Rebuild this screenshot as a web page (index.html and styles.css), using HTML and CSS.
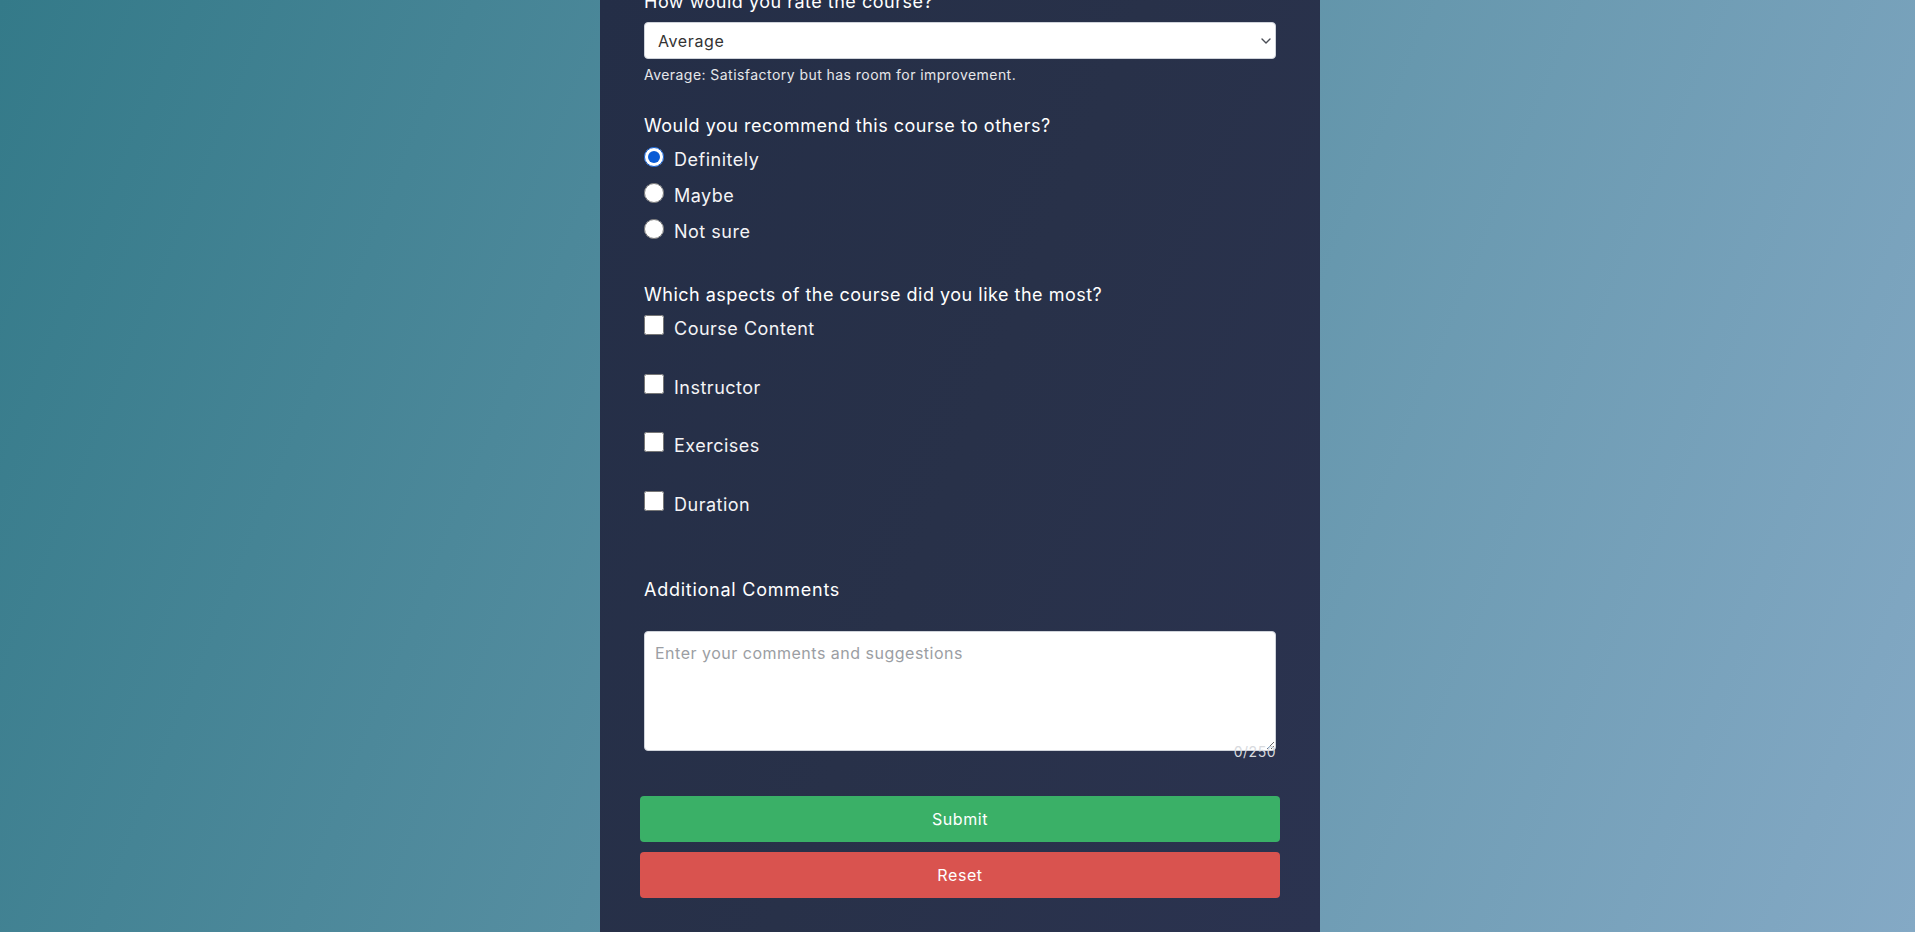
FILE: index.html
```html
<!DOCTYPE html>
<html lang="en">
<head>
<meta charset="utf-8">
<title>Course Feedback</title>
<link rel="stylesheet" href="styles.css">
</head>
<body>
<div class="page">
  <main class="panel">
    <form class="survey">
      <div class="group group-rating">
        <label class="q" for="rating">How would you rate the course?</label>
        <div class="select-wrap">
          <select id="rating" class="select">
            <option>Excellent</option>
            <option>Good</option>
            <option selected>Average</option>
            <option>Poor</option>
          </select>
          <svg class="chevron" width="10" height="6" viewBox="0 0 10 6" aria-hidden="true"><path d="M1 1l4 4 4-4" fill="none" stroke="#4a4d55" stroke-width="1.4" stroke-linecap="round" stroke-linejoin="round"/></svg>
        </div>
        <p class="hint">Average: Satisfactory but has room for improvement.</p>
      </div>

      <div class="group group-recommend">
        <p class="q">Would you recommend this course to others?</p>
        <div class="radio-list">
          <label class="opt"><input class="radio" type="radio" name="recommend" checked><span>Definitely</span></label>
          <label class="opt"><input class="radio" type="radio" name="recommend"><span>Maybe</span></label>
          <label class="opt"><input class="radio" type="radio" name="recommend"><span>Not sure</span></label>
        </div>
      </div>

      <div class="group group-aspects">
        <p class="q">Which aspects of the course did you like the most?</p>
        <div class="check-list">
          <label class="opt"><input class="check" type="checkbox"><span>Course Content</span></label>
          <label class="opt"><input class="check" type="checkbox"><span>Instructor</span></label>
          <label class="opt"><input class="check" type="checkbox"><span>Exercises</span></label>
          <label class="opt"><input class="check" type="checkbox"><span>Duration</span></label>
        </div>
      </div>

      <div class="group group-comments">
        <label class="q q-comments" for="comments">Additional Comments</label>
        <textarea id="comments" class="comments" placeholder="Enter your comments and suggestions"></textarea>
        <div class="counter">0/250</div>
      </div>

      <div class="actions">
        <button type="submit" class="btn btn-submit">Submit</button>
        <button type="reset" class="btn btn-reset">Reset</button>
      </div>
    </form>
  </main>
</div>
</body>
</html>
```

FILE: styles.css
```css
html, body {
  margin: 0;
  height: 100%;
}

body {
  font-family: Inter, "Noto Sans", "DejaVu Sans", sans-serif;
  color: #f4f4f6;
  letter-spacing: 0.5px;
}

.page {
  height: 100vh;
  overflow: hidden;
  display: flex;
  justify-content: center;
  padding-left: 5px;
  box-sizing: border-box;
  background: linear-gradient(112deg, #347a89 0%, #5d92a6 50%, #84a9c5 100%);
}

.panel {
  width: 720px;
  flex: none;
  box-sizing: border-box;
  padding: 0 40px 40px;
  background: linear-gradient(112deg, #242e47 0%, #283149 50%, #2b3350 100%);
}

.survey {
  margin-top: -12px;
}

.group {
  padding: 0 4px;
}

.q {
  display: block;
  margin: 0 0 7px;
  font-size: 18px;
  line-height: 27px;
  color: #ffffff;
}

.group-rating .q {
  margin-bottom: 7px;
}

.select-wrap {
  position: relative;
}

.select {
  display: block;
  width: 100%;
  height: 37px;
  margin: 0;
  padding: 0 12px 0 13px;
  box-sizing: border-box;
  border: 1px solid #cfd3da;
  border-radius: 4px;
  background: #ffffff;
  color: #333333;
  font-family: inherit;
  font-size: 16px;
  letter-spacing: 0.6px;
  appearance: none;
  -webkit-appearance: none;
}

.chevron {
  position: absolute;
  right: 5px;
  top: 16px;
  pointer-events: none;
}

.hint {
  margin: 5px 0 0;
  font-size: 14px;
  line-height: 21px;
  letter-spacing: 0.45px;
  color: #e6e7ea;
}

.group-recommend {
  margin-top: 27px;
}

.radio-list {
  display: flex;
  flex-direction: column;
  gap: 9px;
}

.check-list {
  display: flex;
  flex-direction: column;
  gap: 31.5px;
}

.opt {
  display: flex;
  align-items: flex-start;
  gap: 10px;
  font-size: 18px;
  line-height: 27px;
  color: #f4f4f6;
}

.radio {
  width: 20px;
  height: 20px;
  margin: 1px 0 0;
  flex: none;
  accent-color: #0b5cd5;
}

.check {
  width: 20px;
  height: 20px;
  margin: 0;
  flex: none;
}

.group-aspects {
  margin-top: 36px;
}

.group-comments {
  margin-top: 58px;
}

.q-comments {
  margin-bottom: 28px;
  letter-spacing: 0.75px;
}

.comments {
  display: block;
  width: 100%;
  height: 120px;
  margin: 0;
  padding: 10px;
  box-sizing: border-box;
  border: 1px solid #cfd3da;
  border-radius: 4px;
  background: #ffffff;
  color: #333333;
  font-family: inherit;
  font-size: 16px;
  line-height: 22px;
  letter-spacing: 0.5px;
}

.comments::placeholder {
  color: #9b9ea3;
}

.counter {
  margin-top: -10px;
  text-align: right;
  font-size: 14px;
  line-height: 21px;
  color: #d8dade;
}

.actions {
  display: flex;
  flex-direction: column;
  gap: 10px;
  margin-top: 34px;
}

.btn {
  display: block;
  width: 100%;
  height: 46px;
  border: none;
  border-radius: 4px;
  color: #ffffff;
  font-family: inherit;
  font-size: 16px;
  letter-spacing: 0.6px;
  cursor: pointer;
}

.btn-submit {
  background: #3ab067;
}

.btn-reset {
  background: #d9534f;
}
```
